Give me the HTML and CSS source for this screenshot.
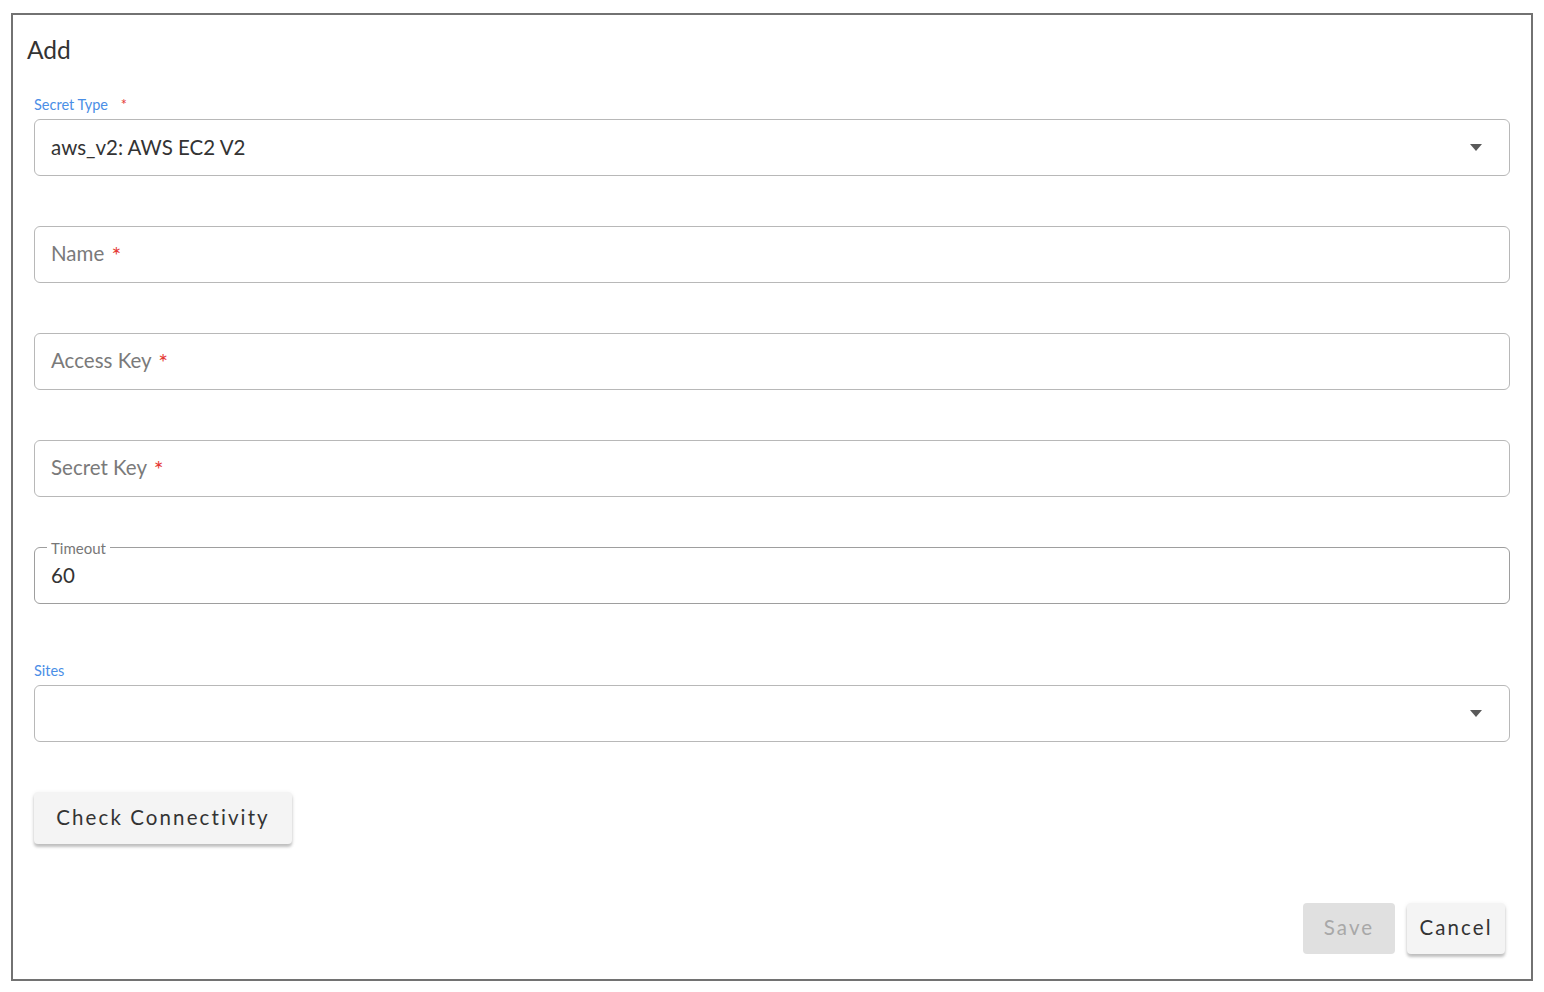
FILE: index.html
```html
<!DOCTYPE html>
<html>
<head>
<meta charset="utf-8">
<link rel="stylesheet" href="styles.css">
</head>
<body>
<div class="frame">
  <div class="title">Add</div>

  <div class="label-top">Secret Type <span class="req">*</span></div>
  <div class="box select">
    <span class="value">aws_v2: AWS EC2 V2</span>
    <span class="caret"></span>
  </div>

  <div class="box field-gap">
    <span class="ph">Name <span class="req">*</span></span>
  </div>

  <div class="box field-gap">
    <span class="ph">Access Key <span class="req">*</span></span>
  </div>

  <div class="box field-gap">
    <span class="ph">Secret Key <span class="req">*</span></span>
  </div>

  <div class="box field-gap notched">
    <span class="legend">Timeout</span>
    <span class="value">60</span>
  </div>

  <div class="label-top sites-label">Sites</div>
  <div class="box select">
    <span class="value"></span>
    <span class="caret"></span>
  </div>

  <div class="check-row">
    <button class="btn raised">Check Connectivity</button>
  </div>

  <div class="footer">
    <button class="btn disabled">Save</button>
    <button class="btn raised">Cancel</button>
  </div>
</div>
</body>
</html>
```
FILE: styles.css
```css
html, body {
  margin: 0;
  padding: 0;
  background: #ffffff;
}
body {
  font-family: Lato, "Open Sans", "Liberation Sans", sans-serif;
  color: #333;
}
.frame {
  margin: 13px 0 0 11px;
  width: 1522px;
  height: 968px;
  box-sizing: border-box;
  border: 2px solid #727272;
  padding: 0 21px 0 21px;
  display: flex;
  flex-direction: column;
  background: #fff;
}
.title {
  margin: 21px 0 0 -7px;
  height: 28px;
  line-height: 28px;
  font-size: 24.5px;
  color: #333;
}
.label-top {
  margin-top: 33px;
  height: 16px;
  line-height: 16px;
  font-size: 14.5px;
  color: #4a8ee6;
}
.label-top .req {
  margin-left: 9px;
  color: #e53935;
}
.sites-label {
  margin-top: 59px;
}
.box {
  margin-top: 6px;
  position: relative;
  height: 57px;
  box-sizing: border-box;
  border: 1.5px solid #b8b8b8;
  border-radius: 6px;
  display: flex;
  align-items: center;
  padding: 0 16px 2px 16px;
  font-size: 20.5px;
}
.field-gap {
  margin-top: 50px;
}
.value {
  color: #333;
  flex: 1;
}
.ph {
  color: #7a7a7a;
}
.req {
  color: #e53935;
}
.ph .req {
  margin-left: 2px;
  font-size: 23px;
  line-height: 1;
  vertical-align: -3px;
}
.caret {
  width: 0;
  height: 0;
  border-left: 6.5px solid transparent;
  border-right: 6.5px solid transparent;
  border-top: 7px solid #5a5a5a;
  margin-right: 11px;
  margin-bottom: -2px;
}
.notched {
  border-color: #9e9e9e;
}
.legend {
  position: absolute;
  left: 12px;
  top: -8px;
  padding: 0 4px;
  background: #fff;
  font-size: 15px;
  line-height: 16px;
  color: #777;
}
.check-row {
  margin-top: 50px;
  display: flex;
}
.btn {
  font-family: Lato, "Open Sans", "Liberation Sans", sans-serif;
  font-size: 20.5px;
  letter-spacing: 2.1px;
  border: none;
  border-radius: 4px;
  height: 52px;
  padding: 0 0 2px 0;
  color: #333;
  background: #f4f4f4;
  cursor: pointer;
}
.raised {
  box-shadow: 0 3px 3px rgba(0,0,0,0.22), 0 1px 5px rgba(0,0,0,0.08);
}
.check-row .btn {
  width: 258px;
}
.footer {
  margin-top: auto;
  margin-bottom: 25px;
  padding-right: 5px;
  display: flex;
  justify-content: flex-end;
  gap: 12px;
}
.footer .btn {
  height: 51px;
  padding-bottom: 4px;
}
.disabled {
  background: #e0e0e0;
  color: #a8a8a8;
  width: 92px;
}
.footer .raised {
  width: 98px;
}
```
